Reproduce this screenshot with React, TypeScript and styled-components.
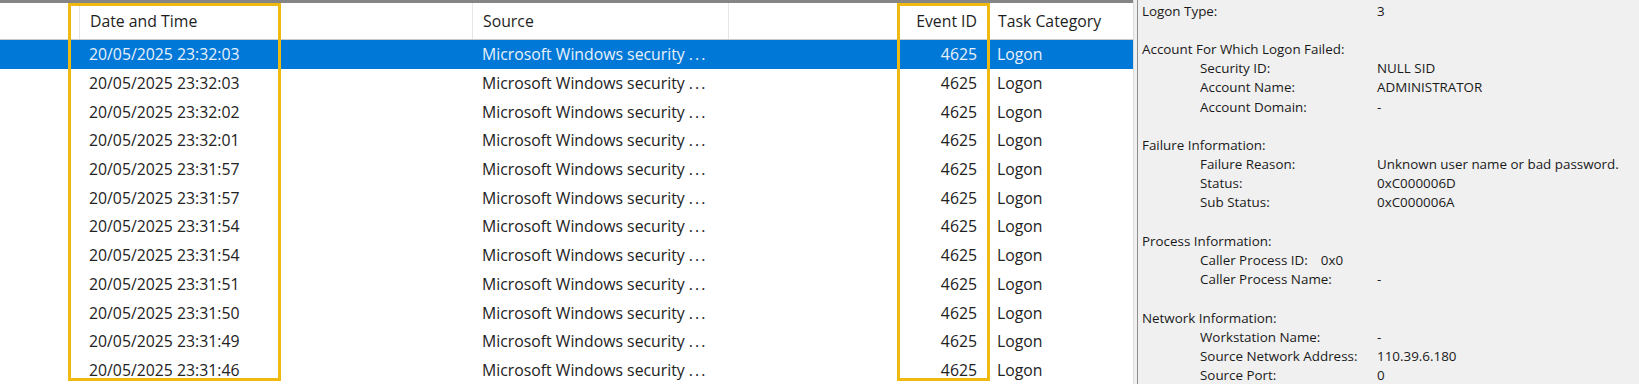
import * as React from "react";
import styled, { createGlobalStyle } from "styled-components";

interface IEventRow {
  time: string;
}

interface IDetailLine {
  label?: string;
  value?: string;
  indent?: boolean;
  inline?: boolean;
}

const rows: IEventRow[] = [
  { time: "20/05/2025 23:32:03" },
  { time: "20/05/2025 23:32:03" },
  { time: "20/05/2025 23:32:02" },
  { time: "20/05/2025 23:32:01" },
  { time: "20/05/2025 23:31:57" },
  { time: "20/05/2025 23:31:57" },
  { time: "20/05/2025 23:31:54" },
  { time: "20/05/2025 23:31:54" },
  { time: "20/05/2025 23:31:51" },
  { time: "20/05/2025 23:31:50" },
  { time: "20/05/2025 23:31:49" },
  { time: "20/05/2025 23:31:46" }
];

const details: IDetailLine[] = [
  { label: "Logon Type:", value: "3" },
  {},
  { label: "Account For Which Logon Failed:" },
  { label: "Security ID:", value: "NULL SID", indent: true },
  { label: "Account Name:", value: "ADMINISTRATOR", indent: true },
  { label: "Account Domain:", value: "-", indent: true },
  {},
  { label: "Failure Information:" },
  { label: "Failure Reason:", value: "Unknown user name or bad password.", indent: true },
  { label: "Status:", value: "0xC000006D", indent: true },
  { label: "Sub Status:", value: "0xC000006A", indent: true },
  {},
  { label: "Process Information:" },
  { label: "Caller Process ID:", value: "0x0", indent: true, inline: true },
  { label: "Caller Process Name:", value: "-", indent: true },
  {},
  { label: "Network Information:" },
  { label: "Workstation Name:", value: "-", indent: true },
  { label: "Source Network Address:", value: "110.39.6.180", indent: true },
  { label: "Source Port:", value: "0", indent: true }
];

const App: React.FunctionComponent = () => {
  return (
    <Screen>
      <GlobalStyle />
      <ListPane>
        <TopEdge />
        <HeaderRow>
          <HeadCell />
          <HeadCell $sep>Date and Time</HeadCell>
          <HeadCell $sep>Source</HeadCell>
          <HeadCell $sep />
          <HeadCell $sep $right>
            Event ID
          </HeadCell>
          <HeadCell $sep>Task Category</HeadCell>
        </HeaderRow>
        {rows.map((row, i) => (
          <EventRow key={i} $selected={i === 0}>
            <Cell />
            <Cell>{row.time}</Cell>
            <Cell>
              Microsoft Windows security <Dots>...</Dots>
            </Cell>
            <Cell />
            <Cell $right>4625</Cell>
            <Cell>Logon</Cell>
          </EventRow>
        ))}
        <Highlight $left={68} $width={213} />
        <Highlight $left={897} $width={93} />
      </ListPane>
      <DetailPane>
        {details.map((line, i) => (
          <DetailLine key={i} $indent={!!line.indent} $inline={!!line.inline}>
            <span>{line.label || "\u00a0"}</span>
            {line.value && <span>{line.value}</span>}
          </DetailLine>
        ))}
      </DetailPane>
    </Screen>
  );
};

export default App;

const GlobalStyle = createGlobalStyle`
  html, body {
    margin: 0;
    padding: 0;
    background: #ffffff;
  }
  body {
    font-family: "Open Sans", "Noto Sans", sans-serif;
  }
`;

const Screen = styled.div`
  display: flex;
  width: 1639px;
  height: 384px;
  overflow: hidden;
  background: #ffffff;
`;

const ListPane = styled.div`
  position: relative;
  width: 1133px;
  flex: none;
  background: #ffffff;
`;

const TopEdge = styled.div`
  height: 3px;
  background: #858585;
`;

const HeaderRow = styled.div`
  display: grid;
  grid-template-columns: 79px 393px 256px 171px 88px 1fr;
  height: 36px;
  border-bottom: 1px solid #c9c9c9;
  color: #1e1e1e;
  font-size: 15.8px;
`;

const HeadCell = styled.div<{ $sep?: boolean; $right?: boolean }>`
  display: flex;
  align-items: center;
  justify-content: ${p => (p.$right ? "flex-end" : "flex-start")};
  padding: ${p => (p.$right ? "0 10px 0 0" : "0 0 0 10px")};
  border-left: ${p => (p.$sep ? "1px solid #e6e6e6" : "none")};
  white-space: nowrap;
  overflow: hidden;
`;

const EventRow = styled.div<{ $selected: boolean }>`
  display: grid;
  grid-template-columns: 79px 393px 256px 171px 88px 1fr;
  height: 28.7px;
  background: ${p => (p.$selected ? "#0078d7" : "transparent")};
  color: ${p => (p.$selected ? "#e9f1fb" : "#222222")};
  font-size: 15.8px;
`;

const Cell = styled.div<{ $right?: boolean }>`
  display: flex;
  align-items: center;
  justify-content: ${p => (p.$right ? "flex-end" : "flex-start")};
  padding: ${p => (p.$right ? "0 10px 0 0" : "0 0 0 10px")};
  white-space: pre;
  overflow: hidden;
`;

const Dots = styled.span`
  letter-spacing: 2px;
`;

const Highlight = styled.div<{ $left: number; $width: number }>`
  position: absolute;
  top: 3px;
  left: ${p => p.$left}px;
  width: ${p => p.$width}px;
  height: 378px;
  box-sizing: border-box;
  border: 3px solid #efb90f;
  pointer-events: none;
`;

const DetailPane = styled.div`
  flex: 1;
  padding: 1px 0 0 8px;
  background: #f0f0f0;
  border-left: 1px solid #dcdcdc;
  box-shadow: inset 3px 0 0 #f0f0f0, inset 4px 0 0 #8f8f8f;
  color: #1a1a1a;
  font-size: 13.4px;
`;

const DetailLine = styled.div<{ $indent: boolean; $inline: boolean }>`
  display: flex;
  height: 19.2px;
  align-items: center;
  padding-left: ${p => (p.$indent ? "58px" : "0")};
  white-space: nowrap;

  & > span:first-child {
    width: ${p => (p.$inline ? "auto" : p.$indent ? "177px" : "235px")};
    margin-right: ${p => (p.$inline ? "13px" : "0")};
    flex: none;
  }
`;
